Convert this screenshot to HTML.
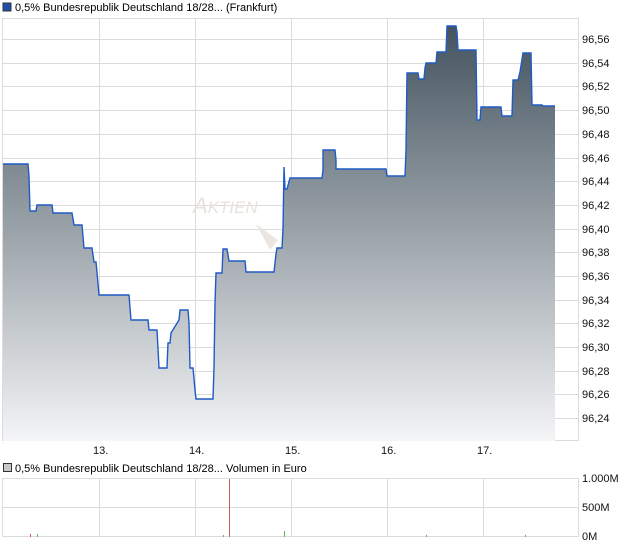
<!DOCTYPE html>
<html><head><style>
body{margin:0;background:#fff;width:620px;height:546px;overflow:hidden;font-family:"Liberation Sans",sans-serif}
</style></head><body>
<svg width="620" height="546" xmlns="http://www.w3.org/2000/svg" font-family="Liberation Sans, sans-serif" font-size="11">
<defs><linearGradient id="g" gradientUnits="userSpaceOnUse" x1="0" y1="26" x2="0" y2="441">
<stop offset="0" stop-color="#44535f"/><stop offset="1" stop-color="#f4f5f6"/></linearGradient></defs>
<rect x="3" y="3" width="8" height="8" fill="#1f4fa8" stroke="#333" stroke-width="1"/>
<text x="15" y="11">0,5% Bundesrepublik Deutschland 18/28... (Frankfurt)</text>
<g stroke="#dcdcdc" stroke-width="1">
<rect x="2.5" y="18.5" width="576" height="422" fill="none"/>
<line x1="99.5" y1="18" x2="99.5" y2="441"/><line x1="195.5" y1="18" x2="195.5" y2="441"/><line x1="291.5" y1="18" x2="291.5" y2="441"/><line x1="387.5" y1="18" x2="387.5" y2="441"/><line x1="483.5" y1="18" x2="483.5" y2="441"/>
<line x1="2" y1="39.5" x2="579" y2="39.5"/><line x1="2" y1="63.5" x2="579" y2="63.5"/><line x1="2" y1="86.5" x2="579" y2="86.5"/><line x1="2" y1="110.5" x2="579" y2="110.5"/><line x1="2" y1="134.5" x2="579" y2="134.5"/><line x1="2" y1="158.5" x2="579" y2="158.5"/><line x1="2" y1="181.5" x2="579" y2="181.5"/><line x1="2" y1="205.5" x2="579" y2="205.5"/><line x1="2" y1="229.5" x2="579" y2="229.5"/><line x1="2" y1="252.5" x2="579" y2="252.5"/><line x1="2" y1="276.5" x2="579" y2="276.5"/><line x1="2" y1="300.5" x2="579" y2="300.5"/><line x1="2" y1="323.5" x2="579" y2="323.5"/><line x1="2" y1="347.5" x2="579" y2="347.5"/><line x1="2" y1="371.5" x2="579" y2="371.5"/><line x1="2" y1="394.5" x2="579" y2="394.5"/><line x1="2" y1="418.5" x2="579" y2="418.5"/>
</g>
<text x="193" y="213" font-size="22" font-style="italic" fill="#e8e2dc">A<tspan font-size="17">KTIEN</tspan></text>
<path d="M256 224 L278 240 L270 250 Z" fill="#ebe6e0"/>
<path d="M3,164 L28,164 L29,176 L30,211 L36,211 L37,205 L52,205 L53,213 L72,213 L74,225 L82,225 L84,248 L92,248 L94,262 L96,262 L97,272 L99,295 L129,295 L131,320 L148,320 L149,330 L157,330 L159,368 L167,368 L168,343 L170,343 L171,333 L179,320 L180,310 L188,310 L189,323 L190,368 L193,368 L195,390 L196,399 L213,399 L214,368 L215,303 L216,273 L222,273 L223,249 L227,249 L229,261 L245,261 L246,272 L274,272 L276,254 L277,248 L282,248 L283,228 L284,167 L285,189 L287,189 L290,178 L291,178 L322,178 L323,170 L323,150 L335,150 L336,160 L336,169 L386,169 L387,176 L405,176 L406,150 L407,73 L418,73 L419,79 L424,79 L425,68 L426,63 L436,63 L437,52 L446,52 L447,26 L456,26 L457,32 L458,50 L476,50 L477,120 L480,120 L481,107 L501,107 L502,116 L512,116 L513,80 L518,80 L520,72 L523,53 L531,53 L532,105 L542,105 L543,106 L555,106 L555,441 L3,441 Z" fill="url(#g)" stroke="none"/>
<path d="M3,164 L28,164 L29,176 L30,211 L36,211 L37,205 L52,205 L53,213 L72,213 L74,225 L82,225 L84,248 L92,248 L94,262 L96,262 L97,272 L99,295 L129,295 L131,320 L148,320 L149,330 L157,330 L159,368 L167,368 L168,343 L170,343 L171,333 L179,320 L180,310 L188,310 L189,323 L190,368 L193,368 L195,390 L196,399 L213,399 L214,368 L215,303 L216,273 L222,273 L223,249 L227,249 L229,261 L245,261 L246,272 L274,272 L276,254 L277,248 L282,248 L283,228 L284,167 L285,189 L287,189 L290,178 L291,178 L322,178 L323,170 L323,150 L335,150 L336,160 L336,169 L386,169 L387,176 L405,176 L406,150 L407,73 L418,73 L419,79 L424,79 L425,68 L426,63 L436,63 L437,52 L446,52 L447,26 L456,26 L457,32 L458,50 L476,50 L477,120 L480,120 L481,107 L501,107 L502,116 L512,116 L513,80 L518,80 L520,72 L523,53 L531,53 L532,105 L542,105 L543,106 L555,106" fill="none" stroke="#1f5bc4" stroke-width="1.4"/>
<g fill="#111">
<text x="582" y="43">96,56</text><text x="582" y="67">96,54</text><text x="582" y="90">96,52</text><text x="582" y="114">96,50</text><text x="582" y="138">96,48</text><text x="582" y="162">96,46</text><text x="582" y="185">96,44</text><text x="582" y="209">96,42</text><text x="582" y="233">96,40</text><text x="582" y="256">96,38</text><text x="582" y="280">96,36</text><text x="582" y="304">96,34</text><text x="582" y="327">96,32</text><text x="582" y="351">96,30</text><text x="582" y="375">96,28</text><text x="582" y="398">96,26</text><text x="582" y="422">96,24</text>
<text x="93" y="454">13.</text><text x="189" y="454">14.</text><text x="285" y="454">15.</text><text x="381" y="454">16.</text><text x="477" y="454">17.</text>
</g>
<rect x="3.5" y="463.5" width="8" height="8" fill="#c8c8c8" stroke="#333"/>
<text x="15" y="472">0,5% Bundesrepublik Deutschland 18/28... Volumen in Euro</text>
<g stroke="#dcdcdc" stroke-width="1">
<rect x="2.5" y="478.5" width="576" height="58" fill="none"/>
<line x1="2" y1="507.5" x2="579" y2="507.5"/>
<line x1="99.5" y1="478" x2="99.5" y2="537"/><line x1="195.5" y1="478" x2="195.5" y2="537"/><line x1="291.5" y1="478" x2="291.5" y2="537"/><line x1="387.5" y1="478" x2="387.5" y2="537"/><line x1="483.5" y1="478" x2="483.5" y2="537"/>
</g>
<g stroke-width="1">
<line x1="229.5" y1="479" x2="229.5" y2="537" stroke="#c86060"/>
<line x1="30.5" y1="534" x2="30.5" y2="537" stroke="#e05050"/>
<line x1="37.5" y1="534" x2="37.5" y2="537" stroke="#50c050"/>
<line x1="223.5" y1="535" x2="223.5" y2="537" stroke="#50c050"/>
<line x1="284.5" y1="531" x2="284.5" y2="537" stroke="#50c050"/>
<line x1="426.5" y1="535" x2="426.5" y2="537" stroke="#50c050"/>
<line x1="525.5" y1="535" x2="525.5" y2="537" stroke="#50c050"/>
</g>
<g fill="#111"><text x="582" y="482">1.000M</text><text x="582" y="511">500M</text><text x="582" y="540">0M</text></g>
</svg>
</body></html>
